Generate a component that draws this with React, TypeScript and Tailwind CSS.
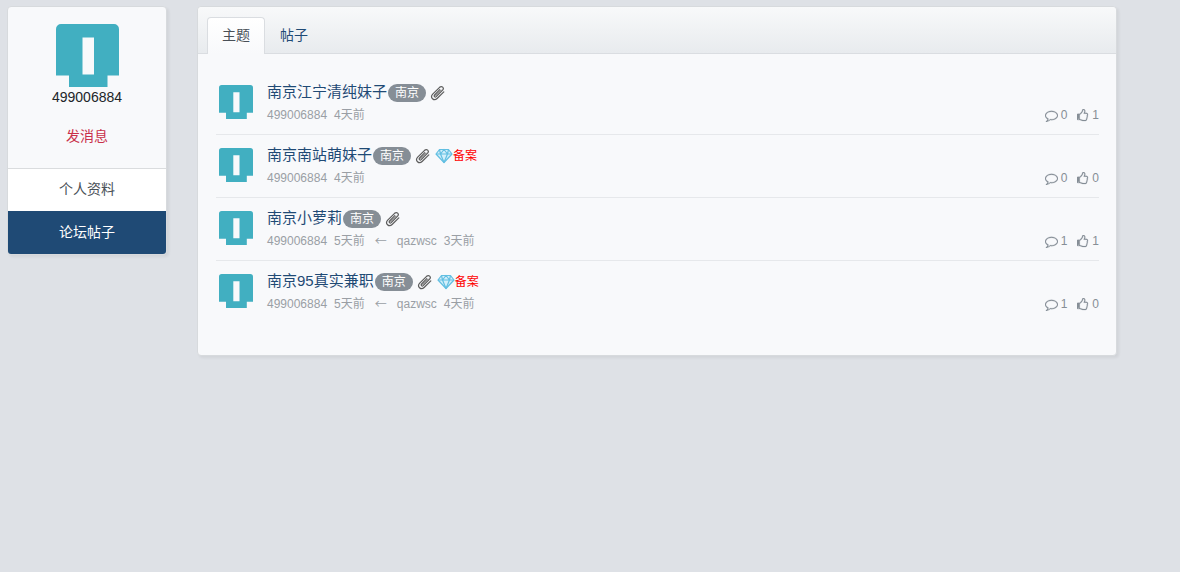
import { useState } from "react";

type Reply = { user: string; time: string };

type Thread = {
  id: number;
  title: string;
  time: string;
  reply?: Reply;
  verified?: boolean;
  comments: number;
  likes: number;
};

const USER = '499006884';

const threads: Thread[] = [
  { id: 1, title: '南京江宁清纯妹子', time: '4天前', comments: 0, likes: 1 },
  { id: 2, title: '南京南站萌妹子', time: '4天前', verified: true, comments: 0, likes: 0 },
  { id: 3, title: '南京小萝莉', time: '5天前', reply: { user: 'qazwsc', time: '3天前' }, comments: 1, likes: 1 },
  { id: 4, title: '南京95真实兼职', time: '5天前', reply: { user: 'qazwsc', time: '4天前' }, verified: true, comments: 1, likes: 0 },
];

function Avatar({ className }: { className: string }) {
  return (
    <svg viewBox="0 0 63 63" className={ `shrink-0 ${className}` } aria-hidden="true">
      <path
        fill="#41afc1"
        fillRule="evenodd"
        d="M5 0h53a5 5 0 0 1 5 5v46.500H51.500V63H13V51.500H0V5a5 5 0 0 1 5-5zM26.500 13.500v37h11.500v-37z"
      />
    </svg>
  );
}

function ClipIcon() {
  return (
    <svg viewBox="0 0 16 16" className="mr-1 size-4 shrink-0" fill="none" stroke="#5c5c5c" strokeLinecap="round" strokeLinejoin="round" aria-hidden="true">
      <path strokeWidth="1.200" d="M9.800 4.600 4.600 10c-1.100 1.200.4 2.700 1.600 1.600l6.400-6.400c2-2.200-.8-4.900-3-2.900L2.700 9.200c-3.100 3.300 1.200 7.400 4.400 4.300l6.700-6.600" />
      <path strokeWidth="0.900" d="m11.200 5.100-5.400 5.500" />
    </svg>
  );
}

function DiamondIcon() {
  return (
    <svg viewBox="0 0 18 16" className="h-4 w-[18px] shrink-0" fill="#d3effa" stroke="#62bfe2" strokeWidth="1.200" strokeLinejoin="round" aria-hidden="true">
      <path d="M4.500 1.500h9L17 6l-8 8.500L1 6z" />
      <path fill="none" d="M1 6h16M5.500 6 9 14.500 12.500 6M4.500 1.500l1 4.500L9 1.500 12.500 6l1-4.500" />
    </svg>
  );
}

function CommentIcon() {
  return (
    <svg viewBox="0 0 1792 1792" className="size-[13px]" fill="currentColor" stroke="currentColor" strokeWidth="30" aria-hidden="true">
      <path d="M896 384q-204 0-381.500 69.500t-282 187.500-104.500 255q0 112 71.500 213.500t201.500 175.500l87 50-27 96q-24 91-70 172 152-63 275-171l43-38 57 6q69 8 130 8 204 0 381.500-69.500t282-187.500 104.500-255-104.500-255-282-187.500-381.500-69.500zm896 512q0 174-120 321.500t-326 233-450 85.500q-70 0-145-8-198 175-460 242-49 14-114 22h-5q-15 0-27-10.500t-16-27.500v-1q-3-4-.5-12t2-10 4.500-9.500l6-9 7-8.500 8-9q7-8 31-34.500t34.500-38 31-39.500 32.500-51 27-59 26-76q-157-89-247.500-220t-90.500-281q0-174 120-321.500t326-233 450-85.500 450 85.500 326 233 120 321.500z" />
    </svg>
  );
}

function LikeIcon() {
  return (
    <svg viewBox="0 0 1664 1792" className="h-[13px] w-3" fill="currentColor" stroke="currentColor" strokeWidth="30" aria-hidden="true">
      <path d="M256 1408q0-26-19-45t-45-19-45 19-19 45 19 45 45 19 45-19 19-45zm1152-640q0-51-39-89.500t-89-38.500h-352q0-58 48-159.500t48-160.500q0-98-32-145t-128-47q-26 26-38 85t-30.500 125.500-59.500 109.500q-22 23-77 91-4 5-23 30t-31.500 41-34.500 42.500-40 44-38.500 35.500-40 27-35.500 9h-32v640h32q13 0 31.500 3t33 6.500 38 11 35 11.500 35.500 12.500 29 10.500q211 73 342 73h121q192 0 192-167 0-26-5-56 30-16 47.500-52.500t17.500-73.500-18-69q53-50 53-119 0-25-10-55.500t-25-47.500q32-1 53.500-47t21.500-81zm128-1q0 89-49 163 9 33 9 69 0 77-38 144 3 21 3 43 0 101-60 178 1 139-85 219.500t-227 80.500h-129q-96 0-189.500-22.500t-216.500-65.500q-116-40-138-40h-288q-53 0-90.500-37.500t-37.500-90.500v-640q0-53 37.500-90.500t90.500-37.500h274q36-24 137-155 58-75 107-128 24-25 35.500-85.500t30.500-126.500 62-108q39-37 90-37 84 0 151 32.500t102 101.500 35 186q0 93-48 192h176q104 0 180 76t76 179z" />
    </svg>
  );
}

function Sidebar() {
  return (
    <aside className="w-40 shrink-0 overflow-hidden rounded border border-[#d7dadd] bg-[#f8f9fb] text-center text-sm shadow-[2px_2px_3px_rgba(0,0,0,0.06)]">
      <div className="flex flex-col items-center pt-[17px] pb-[22px]">
        <Avatar className="size-[63px]" />
        <span className="text-[#212529]">{ USER }</span>
        <a href="#message" className="mt-[19px] text-[#c9304a]">发消息</a>
      </div>
      <nav>
        <a href="#profile" className="block border-t border-[#dadcde] bg-white pt-[10px] pb-3 text-[#495057]">个人资料</a>
        <a href="#posts" className="block border-t border-[#1f4a75] bg-[#1f4a75] pt-[10px] pb-3 text-white">论坛帖子</a>
      </nav>
    </aside>
  );
}

function ThreadRow({ thread }: { thread: Thread }) {
  return (
    <li className="flex border-b border-[#e6e8eb] py-2 pl-[3px] last:border-b-0">
      <Avatar className="mt-[5px] mr-[14px] size-[34px]" />
      <div className="min-w-0 flex-1">
        <div className="flex h-6 items-center">
          <a href="#thread" className="text-[15px] text-[#1f4a75]">{ thread.title }</a>
          <div className="mt-[2px] ml-px flex items-center">
            <span className="mr-1 rounded-full bg-[#868e96] px-[7px] text-xs leading-[18px] text-white">南京</span>
            <ClipIcon />
            { thread.verified &&
              <>
                <DiamondIcon />
                <span className="text-xs text-[#ff0000]">备案</span>
              </>
            }
          </div>
        </div>
        <div className="flex justify-between text-xs leading-[22px] text-[#9a9fa5]">
          <div className="flex gap-[7px]">
            <span>{ USER }</span>
            <span>{ thread.time }</span>
            { thread.reply &&
              <>
                <span className="px-[3px] font-['Noto_Sans_CJK_SC',sans-serif]">←</span>
                <span>{ thread.reply.user }</span>
                <span>{ thread.reply.time }</span>
              </>
            }
          </div>
          <div className="flex gap-[10px] text-[#868e96]">
            <span className="flex items-center gap-[3px]"><CommentIcon />{ thread.comments }</span>
            <span className="flex items-center gap-[3px]"><LikeIcon />{ thread.likes }</span>
          </div>
        </div>
      </div>
    </li>
  );
}

export default function App() {
  const [tab, setTab] = useState('主题');

  return (
    <div className="min-h-screen bg-[#dee1e6] font-['Liberation_Sans','Noto_Sans_CJK_SC',sans-serif]">
      <div className="flex max-w-[1124px] items-start gap-[30px] px-[7px] pt-[6px]">
        <Sidebar />
        <main className="min-w-0 flex-1 rounded border border-[#d7dadd] bg-[#f8f9fb] shadow-[2px_2px_3px_rgba(0,0,0,0.06)]">
          <div role="tablist" className="flex rounded-t border-b border-[#dadde1] bg-linear-to-b from-[#f8f9fa] to-[#e8ebee] px-[9px] pt-[10px]">
            { ['主题', '帖子'].map((name) => (
              <button
                key={ name }
                type="button"
                role="tab"
                aria-selected={ tab === name }
                onClick={ () => setTab(name) }
                className={ `-mb-px rounded-t border border-b-0 px-[14px] pt-[7px] pb-[9px] text-sm ${ tab === name ? 'border-[#dadde1] bg-linear-to-b from-white to-[#f8f9fb] text-[#495057]' : 'border-transparent text-[#1f4a75]' }` }
              >
                { name }
              </button>
            )) }
          </div>
          <ul className="pt-[18px] pr-[17px] pb-8 pl-[18px]">
            { threads.map((thread) => <ThreadRow key={ thread.id } thread={ thread } />) }
          </ul>
        </main>
      </div>
    </div>
  );
}
